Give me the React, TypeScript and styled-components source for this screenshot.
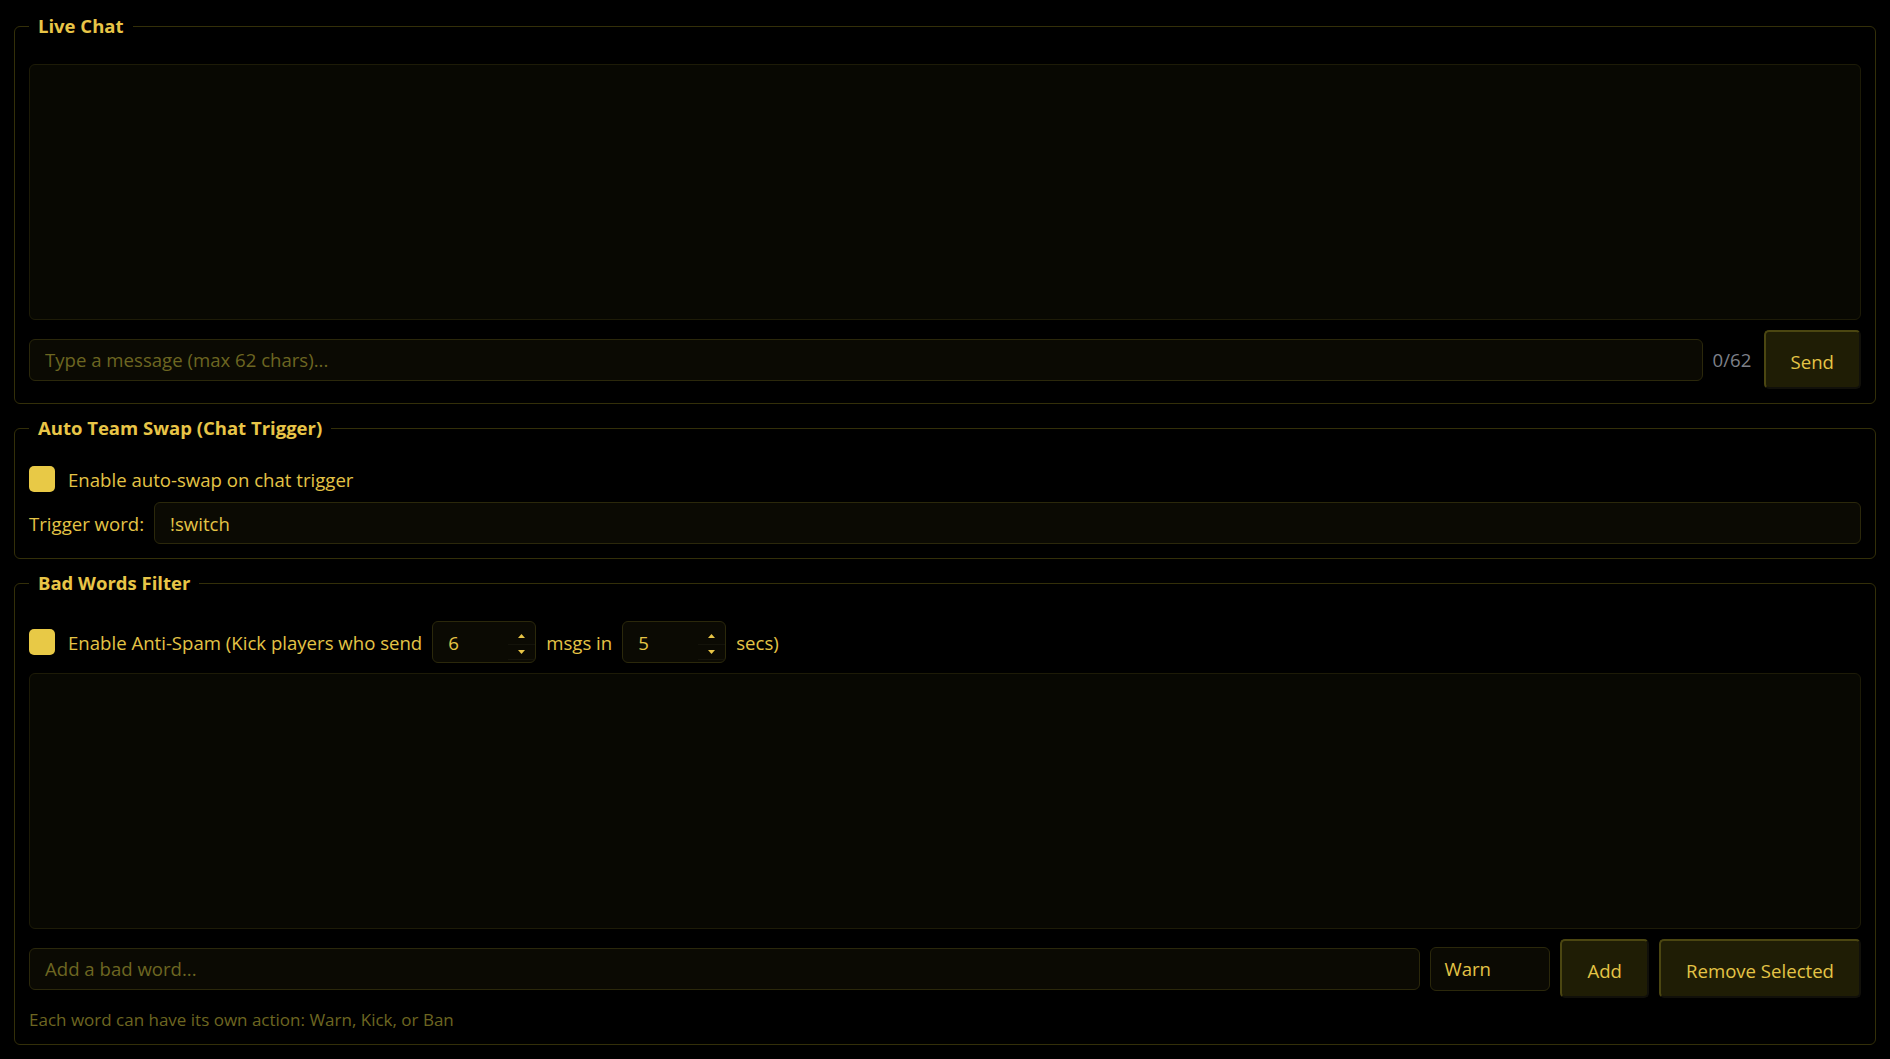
import styled, { createGlobalStyle } from "styled-components";
import { ReactNode } from "react";

const gold = "#e8c547";
const text = "#e4c446";
const muted = "#6d6621";

const GlobalStyle = createGlobalStyle`
  html, body {
    margin: 0;
    padding: 0;
    background: #000;
  }
  body {
    font-family: "Open Sans", "Noto Sans", sans-serif;
    color: ${text};
  }
  * {
    box-sizing: border-box;
  }
`;

const Page = styled.div`
  display: flex;
  flex-direction: column;
  gap: 11px;
  padding: 13px 14px 0 14px;
`;

const Panel = styled.fieldset`
  margin: 0;
  padding: 25px 14px 14px 14px;
  border: 1px solid #332f09;
  border-radius: 6px;
  display: flex;
  flex-direction: column;
  gap: 10px;
  min-width: 0;
`;

const Legend = styled.legend`
  padding: 0 9px;
  margin-left: 0;
  font-size: 18.5px;
  line-height: 26px;
  font-weight: 700;
  color: ${gold};
`;

const LogBox = styled.div<{ $height: number }>`
  height: ${({ $height }) => $height}px;
  background: #080802;
  border: 1px solid #1d1b07;
  border-radius: 6px;
  overflow-y: auto;
`;

const Row = styled.div<{ $height?: number }>`
  display: flex;
  align-items: center;
  gap: 10px;
  min-height: ${({ $height }) => ($height ? `${$height}px` : "auto")};
  font-size: 18.6px;
  color: ${text};
`;

const TextInput = styled.input`
  flex: 1;
  min-width: 0;
  height: 42px;
  padding: 0 15px;
  background: #0b0a03;
  border: 1px solid #2b280b;
  border-radius: 6px;
  color: ${text};
  font-family: inherit;
  font-size: 18.6px;
  outline: none;

  &::placeholder {
    color: ${muted};
  }
`;

const Select = styled.select`
  appearance: none;
  width: 120px;
  height: 44px;
  padding: 0 13px;
  background: #0b0a03;
  border: 1px solid #2b280b;
  border-radius: 6px;
  color: ${text};
  font-family: inherit;
  font-size: 18.6px;
  outline: none;
`;

const Counter = styled.span`
  font-size: 18.6px;
  color: #7e8089;
  min-width: 41px;
`;

const Button = styled.button`
  height: 59px;
  padding: 3px 25px 0;
  background: #1f1d05;
  border: 2px solid #4b4611;
  border-right-color: #11100a;
  border-bottom-color: #11100a;
  border-radius: 5px;
  color: ${text};
  font-family: inherit;
  font-size: 18.6px;
  white-space: nowrap;
  cursor: pointer;
`;

const Check = styled.input.attrs({ type: "checkbox" })`
  appearance: none;
  flex: none;
  width: 26px;
  height: 26px;
  margin: 0 3px 0 0;
  background: #e8c946;
  border-radius: 5px;
  cursor: pointer;
`;

const NumberBox = styled.label`
  display: flex;
  align-items: stretch;
  width: 104px;
  height: 42px;
  background: #0b0a03;
  border: 1px solid #2b280b;
  border-radius: 6px;
  overflow: hidden;
`;

const NumberField = styled.input`
  flex: 1;
  min-width: 0;
  padding: 0 0 0 15px;
  background: transparent;
  border: none;
  color: ${text};
  font-family: inherit;
  font-size: 18.6px;
  outline: none;
  -moz-appearance: textfield;

  &::-webkit-inner-spin-button,
  &::-webkit-outer-spin-button {
    -webkit-appearance: none;
    margin: 0;
  }
`;

const Spinner = styled.div`
  display: flex;
  flex-direction: column;
  width: 27px;
  padding: 7px 0 2px;
`;

const SpinHalf = styled.span<{ $down?: boolean }>`
  flex: 1;
  display: flex;
  align-items: center;
  justify-content: center;
  border-bottom: ${({ $down }) => ($down ? "1px solid #14130a" : "none")};
  border-top: ${({ $down }) => ($down ? "1px solid #14130a" : "none")};
`;

const Hint = styled.p`
  margin: 2px 0 0;
  font-size: 17px;
  line-height: 20px;
  color: ${muted};
`;

function Arrow({ down }: { down?: boolean }) {
  return (
    <svg width="7" height="4" viewBox="0 0 7 4">
      <path d={down ? "M0 0h7L3.5 4z" : "M3.5 0L7 4H0z"} fill={gold} />
    </svg>
  );
}

function NumberInput({ value }: { value: number }) {
  return (
    <NumberBox>
      <NumberField type="number" defaultValue={value} />
      <Spinner>
        <SpinHalf>
          <Arrow />
        </SpinHalf>
        <SpinHalf $down>
          <Arrow down />
        </SpinHalf>
      </Spinner>
    </NumberBox>
  );
}

function Section({ title, children }: { title: string; children: ReactNode }) {
  return (
    <Panel>
      <Legend>{title}</Legend>
      {children}
    </Panel>
  );
}

export default function App() {
  return (
    <>
      <GlobalStyle />
      <Page>
        <Section title="Live Chat">
          <LogBox $height={256} />
          <Row $height={59}>
            <TextInput placeholder="Type a message (max 62 chars)..." maxLength={62} />
            <Counter>0/62</Counter>
            <Button>Send</Button>
          </Row>
        </Section>

        <Section title="Auto Team Swap (Chat Trigger)">
          <Row $height={26}>
            <Check />
            <span>Enable auto-swap on chat trigger</span>
          </Row>
          <Row>
            <span>Trigger word:</span>
            <TextInput defaultValue="!switch" />
          </Row>
        </Section>

        <Section title="Bad Words Filter">
          <Row $height={42}>
            <Check />
            <span>Enable Anti-Spam (Kick players who send</span>
            <NumberInput value={6} />
            <span>msgs in</span>
            <NumberInput value={5} />
            <span>secs)</span>
          </Row>
          <LogBox $height={256} />
          <Row $height={59}>
            <TextInput placeholder="Add a bad word..." />
            <Select defaultValue="warn">
              <option value="warn">Warn</option>
              <option value="kick">Kick</option>
              <option value="ban">Ban</option>
            </Select>
            <Button>Add</Button>
            <Button>Remove Selected</Button>
          </Row>
          <Hint>Each word can have its own action: Warn, Kick, or Ban</Hint>
        </Section>
      </Page>
    </>
  );
}
